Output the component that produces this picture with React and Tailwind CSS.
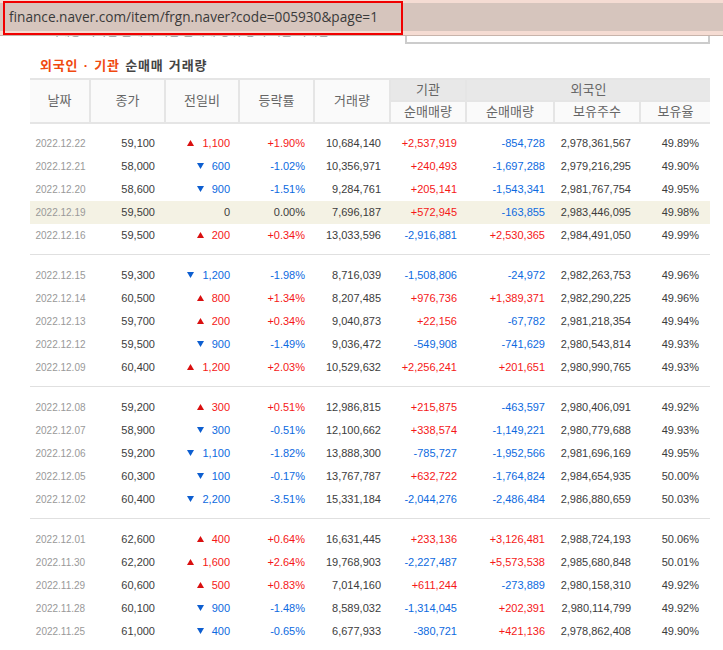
const groups = [
  [
    ['2022.12.22', '59,100', 'up', '1,100', '+1.90%', '10,684,140', '+2,537,919', '-854,728', '2,978,361,567', '49.89%'],
    ['2022.12.21', '58,000', 'down', '600', '-1.02%', '10,356,971', '+240,493', '-1,697,288', '2,979,216,295', '49.90%'],
    ['2022.12.20', '58,600', 'down', '900', '-1.51%', '9,284,761', '+205,141', '-1,543,341', '2,981,767,754', '49.95%'],
    ['2022.12.19', '59,500', 'flat', '0', '0.00%', '7,696,187', '+572,945', '-163,855', '2,983,446,095', '49.98%'],
    ['2022.12.16', '59,500', 'up', '200', '+0.34%', '13,033,596', '-2,916,881', '+2,530,365', '2,984,491,050', '49.99%'],
  ],
  [
    ['2022.12.15', '59,300', 'down', '1,200', '-1.98%', '8,716,039', '-1,508,806', '-24,972', '2,982,263,753', '49.96%'],
    ['2022.12.14', '60,500', 'up', '800', '+1.34%', '8,207,485', '+976,736', '+1,389,371', '2,982,290,225', '49.96%'],
    ['2022.12.13', '59,700', 'up', '200', '+0.34%', '9,040,873', '+22,156', '-67,782', '2,981,218,354', '49.94%'],
    ['2022.12.12', '59,500', 'down', '900', '-1.49%', '9,036,472', '-549,908', '-741,629', '2,980,543,814', '49.93%'],
    ['2022.12.09', '60,400', 'up', '1,200', '+2.03%', '10,529,632', '+2,256,241', '+201,651', '2,980,990,765', '49.93%'],
  ],
  [
    ['2022.12.08', '59,200', 'up', '300', '+0.51%', '12,986,815', '+215,875', '-463,597', '2,980,406,091', '49.92%'],
    ['2022.12.07', '58,900', 'down', '300', '-0.51%', '12,100,662', '+338,574', '-1,149,221', '2,980,779,688', '49.93%'],
    ['2022.12.06', '59,200', 'down', '1,100', '-1.82%', '13,888,300', '-785,727', '-1,952,566', '2,981,696,169', '49.95%'],
    ['2022.12.05', '60,300', 'down', '100', '-0.17%', '13,767,787', '+632,722', '-1,764,824', '2,984,654,935', '50.00%'],
    ['2022.12.02', '60,400', 'down', '2,200', '-3.51%', '15,331,184', '-2,044,276', '-2,486,484', '2,986,880,659', '50.03%'],
  ],
  [
    ['2022.12.01', '62,600', 'up', '400', '+0.64%', '16,631,445', '+233,136', '+3,126,481', '2,988,724,193', '50.06%'],
    ['2022.11.30', '62,200', 'up', '1,600', '+2.64%', '19,768,903', '-2,227,487', '+5,573,538', '2,985,680,848', '50.01%'],
    ['2022.11.29', '60,600', 'up', '500', '+0.83%', '7,014,160', '+611,244', '-273,889', '2,980,158,310', '49.92%'],
    ['2022.11.28', '60,100', 'down', '900', '-1.48%', '8,589,032', '-1,314,045', '+202,391', '2,980,114,799', '49.92%'],
    ['2022.11.25', '61,000', 'down', '400', '-0.65%', '6,677,933', '-380,721', '+421,136', '2,978,862,408', '49.90%'],
  ],
];

const signColor = (v) => {
  if (v.startsWith('+')) return 'text-[#f51818]';
  if (v.startsWith('-')) return 'text-[#0d6ae0]';
  return 'text-[#3c3c3c]';
};

const changeColor = { up: 'text-[#f51818]', down: 'text-[#0d6ae0]', flat: 'text-[#3c3c3c]' };

const Arrow = ({ dir }) => {
  if (dir === 'up') {
    return (
      <svg width="7" height="6" viewBox="0 0 7 6" className="mr-[8px] shrink-0">
        <path d="M3.5 0L7 6H0z" fill="#d90f0f" />
      </svg>
    );
  }
  if (dir === 'down') {
    return (
      <svg width="7" height="6" viewBox="0 0 7 6" className="mr-[8px] shrink-0">
        <path d="M0 0H7L3.5 6z" fill="#0d5ed0" />
      </svg>
    );
  }
  return null;
};

const thBase = 'p-0 font-normal text-[13px] text-[#666666] bg-[#fafafa] border-b-2 border-[#e5e5e5]';
const thSide = `${thBase} border-l-2`;
const thGroup = 'p-0 font-normal text-[13px] text-[#666666] bg-[#e8e8e8] border-l-2 border-b-2 border-[#e5e5e5]';
const tdBase = 'p-0 pr-[9px] text-right';

const Row = ({ r }) => {
  const highlight = r[0] === '2022.12.19';
  return (
    <tr className={`h-[23px] text-[11px] ${highlight ? 'bg-[#f4f2e4]' : ''}`}>
      <td className="p-0 pl-[1px] text-center text-[10px] text-[#999999]">{r[0]}</td>
      <td className={`p-0 pr-[10px] text-right text-[#3c3c3c]`}>{r[1]}</td>
      <td className={`${tdBase} ${changeColor[r[2]]}`}>
        <span className="flex items-center justify-end">
          <Arrow dir={r[2]} />
          {r[3]}
        </span>
      </td>
      <td className={`${tdBase} ${signColor(r[4])}`}>{r[4]}</td>
      <td className={`${tdBase} text-[#3c3c3c]`}>{r[5]}</td>
      <td className={`${tdBase} ${signColor(r[6])}`}>{r[6]}</td>
      <td className={`${tdBase} ${signColor(r[7])}`}>{r[7]}</td>
      <td className={`${tdBase} text-[#3c3c3c]`}>{r[8]}</td>
      <td className={`p-0 pr-[11px] text-right text-[#3c3c3c]`}>{r[9]}</td>
    </tr>
  );
};

export default function App() {
  return (
    <div className="w-[723px] h-[650px] overflow-hidden bg-white font-['Liberation_Sans','Noto_Sans_CJK_KR',sans-serif]">
      {/* address bar laid over the page, red box marks the url */}
      <div className="relative h-[36px] border-b border-[#c8b4ab]">
        <div className="h-full bg-[#d6c5bd] border-t-[3px] border-b-[4px] border-[#f5dcd3] flex items-center pl-[9px] text-[13.65px] font-['Open_Sans','Liberation_Sans',sans-serif] text-[#3a3a3a]">
          finance.naver.com/item/frgn.naver?code=005930&amp;page=1
        </div>
        <div className="absolute left-[3px] top-[1px] w-[400px] h-[34px] border-2 border-[#f00000]" />
      </div>

      <div className="h-[22px] flex items-start justify-between pl-[48px] pr-[13px]">
        <div className="h-[2px] w-[284px] overflow-hidden">
          <p className="-mt-[10px] text-[12px] leading-[12px] whitespace-nowrap text-[#999999]">거래량 외국인 순매매 기관 순매매 상위 종목 최근 거래일 기준 안내</p>
        </div>
        <div className="w-[305px] h-[8px] bg-white border-x-2 border-b-2 border-[#cccccc]" />
      </div>

      <div className="mx-[30px] w-[680px]">
        <h3 className="h-[20px] pt-[1px] leading-[14px] text-[13px] font-bold tracking-[0.8px] [word-spacing:1px] text-[#444444] pl-[10px]">
          <span className="text-[#f04a10]">외국인 · 기관</span> 순매매 거래량
        </h3>
        <table className="w-full table-fixed border-collapse">
          <colgroup>
            <col className="w-[60px]" />
            <col className="w-[75px]" />
            <col className="w-[74px]" />
            <col className="w-[75px]" />
            <col className="w-[76px]" />
            <col className="w-[76px]" />
            <col className="w-[88px]" />
            <col className="w-[86px]" />
            <col className="w-[70px]" />
          </colgroup>
          <thead>
            <tr className="h-[22px] border-t-2 border-[#e5e5e5]">
              <th rowSpan={2} className={thBase}>날짜</th>
              <th rowSpan={2} className={thSide}>종가</th>
              <th rowSpan={2} className={thSide}>전일비</th>
              <th rowSpan={2} className={thSide}>등락률</th>
              <th rowSpan={2} className={thSide}>거래량</th>
              <th className={thGroup}>기관</th>
              <th colSpan={3} className={thGroup}>외국인</th>
            </tr>
            <tr className="h-[21px]">
              <th className={thSide}>순매매량</th>
              <th className={thSide}>순매매량</th>
              <th className={thSide}>보유주수</th>
              <th className={thSide}>보유율</th>
            </tr>
          </thead>
          {groups.map((g, i) => (
            <tbody key={g[0][0]}>
              <tr className="h-[9px]"><td colSpan={9} className="p-0" /></tr>
              {g.map((r) => <Row key={r[0]} r={r} />)}
              <tr className="h-[8px]">
                <td colSpan={9} className={`p-0 ${i < groups.length - 1 ? 'border-b border-[#e0e0e0]' : ''}`} />
              </tr>
            </tbody>
          ))}
        </table>
      </div>
    </div>
  );
}
